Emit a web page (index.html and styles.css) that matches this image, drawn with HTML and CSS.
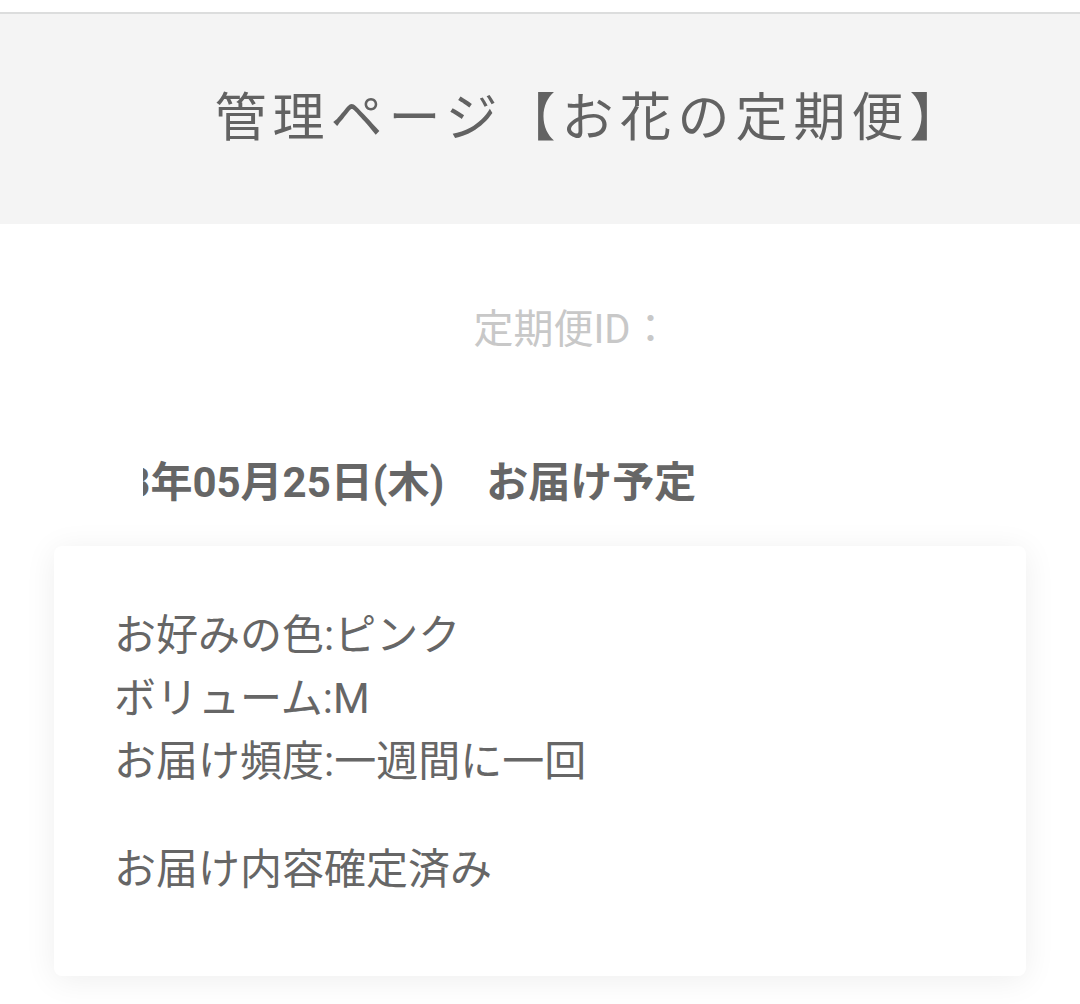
FILE: index.html
```html
<!DOCTYPE html>
<html lang="ja">
<head>
    <meta charset="UTF-8">
    <meta name="viewport" content="width=device-width, initial-scale=1.0">
    <title>管理ページ【お花の定期便】</title>
    <link rel="stylesheet" href="styles.css">
</head>
<body>

<header class="page-header">
    <h1>管理ページ【お花の定期便】</h1>
</header>

<main class="content">
    <p class="teiki-id">定期便ID：</p>

    <div class="delivery-date">
        <span class="date-mask"></span>
        <p>2023年05月25日(木)　お届け予定</p>
    </div>

    <div class="card">
        <ul class="plan-list">
            <li>お好みの色:ピンク</li>
            <li>ボリューム:M</li>
            <li>お届け頻度:一週間に一回</li>
        </ul>
        <p class="status">お届け内容確定済み</p>
    </div>
</main>

</body>
</html>
```

FILE: styles.css
```css
body {
    margin: 0;
    padding-top: 12px;
    font-family: Roboto, "Noto Sans CJK JP", sans-serif;
    color: #666;
    background-color: #fff;
}

.page-header {
    height: 212px;
    box-sizing: border-box;
    border-top: 2px solid #dcdddd;
    background-color: #f4f4f4;
    display: flex;
    align-items: center;
    justify-content: center;
    padding: 0 0 10px 102px;
}

.page-header h1 {
    margin: 0;
    font-family: "Noto Sans CJK JP", sans-serif;
    font-size: 52px;
    font-weight: 400;
    letter-spacing: 6px;
    line-height: 1.2;
    color: #626262;
}

.content {
    padding-bottom: 30px;
}

.teiki-id {
    margin: 76px 0 0;
    padding-left: 64px;
    text-align: center;
    font-size: 40px;
    line-height: 60px;
    color: #c8c8c8;
}

/* 日付の先頭を白いボックスが隠している */
.delivery-date {
    position: relative;
    margin-top: 91px;
    padding-left: 54px;
}

.delivery-date p {
    margin: 0;
    font-size: 42px;
    font-weight: bold;
    line-height: 63px;
    white-space: nowrap;
}

.date-mask {
    position: absolute;
    left: 0;
    top: -10px;
    width: 143px;
    height: 82px;
    background-color: #fff;
    z-index: 2;
}

.card {
    margin: 32px 54px 0;
    padding: 58px 60px 75px 60px;
    background-color: #fff;
    border-radius: 8px;
    box-shadow: 0 4px 32px rgba(0, 0, 0, 0.07);
    font-size: 42px;
    line-height: 63px;
}

.plan-list {
    list-style: none;
    margin: 0;
    padding: 0;
}

.status {
    margin: 45px 0 0;
}
```
